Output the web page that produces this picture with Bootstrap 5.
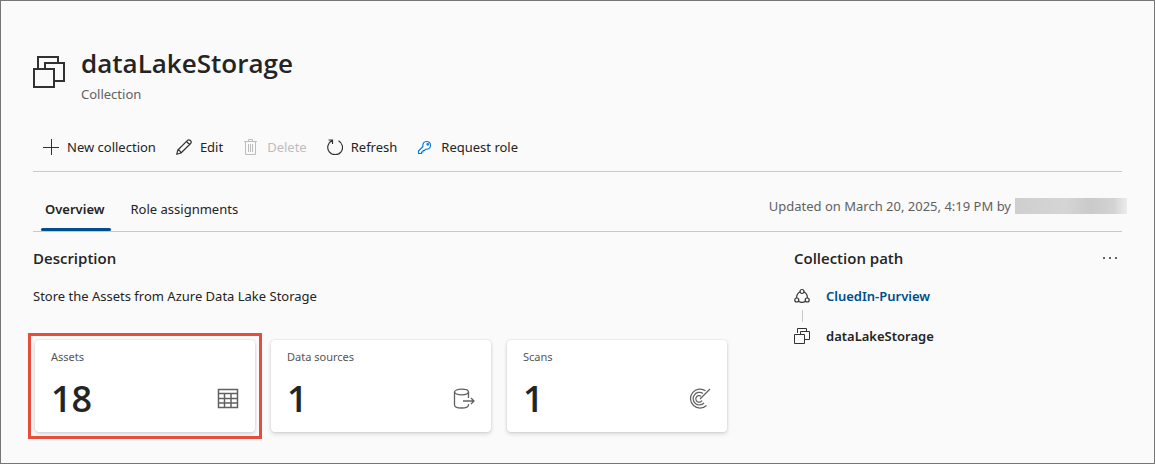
<!DOCTYPE html>
<html lang="en">
<head>
<meta charset="utf-8">
<meta name="viewport" content="width=device-width, initial-scale=1">
<title>dataLakeStorage</title>
<link href="https://cdn.jsdelivr.net/npm/bootstrap@5.3.0/dist/css/bootstrap.min.css" rel="stylesheet">
<style>
body { font-family: "Noto Sans", "Open Sans", sans-serif; font-size: 13px; line-height: 20px; color: #242424; background: #fafafa; }
.page-frame { border: 1px solid #767676; padding: 44px 32px 22px; }
.page-title { font-family: "Open Sans", sans-serif; font-size: 26px; line-height: 36px; font-weight: 600; margin-bottom: 3px; }
.muted-text { color: #616161; }
.rule-below { border-bottom: 1px solid #c8c8c8; }
.command-bar { margin-top: 27px; padding: 0 10px 8px; gap: 20px; }
.command { font-size: 13px; line-height: 32px; color: #242424; border: 0; border-radius: 0; }
.command:disabled { color: #bdbdbd; border: 0; opacity: 1; }
.tab-bar { height: 60px; padding-left: 8px; }
.tab-bar .nav-link { position: relative; color: #242424; padding: 12px 4px; }
.tab-bar .nav-link.active { font-weight: 600; }
.tab-bar .nav-link.active::after { content: ""; position: absolute; left: 0; right: 0; bottom: 0; height: 3px; border-radius: 2px; background: #004e8c; }
.nav-tabs-row { gap: 16px; }
.tab-bar .nav-link.active { padding-right: 6px; }
.redacted { width: 112px; height: 16px; margin-right: -5px; background: linear-gradient(90deg, #cfcfcf, #d5d5d5 45%, #cacaca 68%, #d3d3d3 88%, #ececee); }
.overview { padding-top: 14px; }
.section-title { font-family: "Open Sans", sans-serif; font-size: 15px; line-height: 24px; font-weight: 600; }
.metrics { gap: 16px; margin: 34px 2px 0; }
.metric { flex: 0 1 220px; height: 92px; padding: 6px 16px 0; border-radius: 4px; background: #fff; box-shadow: 0 0 2px rgba(0,0,0,.14), 0 2px 4px rgba(0,0,0,.14); }
.metric-label { font-size: 11px; line-height: 22px; color: #555; }
.metric-value { font-family: "Open Sans", sans-serif; font-size: 36px; line-height: 62px; font-weight: 600; }
.highlighted { position: relative; }
.highlighted::after { content: ""; position: absolute; inset: -7px; border: 3px solid #e74c3c; }
.path-panel { flex: 0 0 328px; }
.path-link { color: #004e8c; }
.path-joint { width: 1px; height: 12px; margin-left: 8px; background: #c8c8c8; }
</style>
</head>
<body>
<main class="page-frame min-vh-100">
  <header class="d-flex gap-3">
    <svg class="mt-2" width="32" height="36" viewBox="0 0 32 36" fill="none" stroke="#323130" stroke-width="2"><path d="M5 15V4h20v6M12 15v-5h19v18h-9M1 16h20v18H1z"/></svg>
    <div>
      <h1 class="page-title">dataLakeStorage</h1>
      <div class="muted-text">Collection</div>
    </div>
  </header>

  <div class="command-bar rule-below d-flex" role="toolbar" aria-label="Collection commands">
    <button type="button" class="command btn p-0 d-flex align-items-center gap-2"><svg width="16" height="16" fill="none" stroke="#323130"><path d="M8.500 0v16M0 8.500h16"/></svg>New collection</button>
    <button type="button" class="command btn p-0 d-flex align-items-center gap-2"><svg width="16" height="16" fill="none" stroke="#323130" stroke-width="1.200" stroke-linejoin="round"><path d="M.7 15.300l1.200-4.300 9.600-9.600q1.200-1.200 2.900.1 1.500 1.500.2 3L5 14zM10.500 2.500l3 3M1.900 11q2.400.3 3.100 3"/></svg>Edit</button>
    <button type="button" class="command btn p-0 d-flex align-items-center gap-2" disabled><svg width="16" height="16" fill="none" stroke="#bdbdbd"><path d="M1 2.500h13M5.500 2V.5h4V2M2.500 3v12.500h10V3M5.500 5v8M7.500 5v8M9.500 5v8"/></svg>Delete</button>
    <button type="button" class="command btn p-0 d-flex align-items-center gap-2"><svg width="16" height="16" fill="none" stroke="#323130" stroke-width="1.200"><path d="M5 1.600a7.400 7.400 0 1 0 6.500.1M1.500 1h4v4"/></svg>Refresh</button>
    <button type="button" class="command btn p-0 d-flex align-items-center gap-2"><svg width="16" height="16" fill="none" stroke="#0078d4" stroke-width="1.100" stroke-linejoin="round"><path d="M6 7.500C5.300 4.500 7 2.500 9.500 2.500c2.300 0 4 1.700 4 3.900 0 2.500-2 4.200-4.700 3.800L7.500 11.500H6V13H4.500v1.500h-3v-2.500z"/><circle cx="10.700" cy="5.300" r=".8"/></svg>Request role</button>
  </div>

  <div class="tab-bar rule-below d-flex justify-content-between">
    <nav class="nav nav-tabs-row align-self-end" aria-label="Sections">
      <a class="nav-link active" href="#overview" aria-current="page">Overview</a>
      <a class="nav-link" href="#roles">Role assignments</a>
    </nav>
    <div class="muted-text d-flex align-items-center gap-1 pt-2">Updated on March 20, 2025, 4:19 PM by <span class="redacted"></span></div>
  </div>

  <div class="overview d-flex" id="overview">
    <section class="flex-grow-1">
      <h2 class="section-title mb-0">Description</h2>
      <p class="mt-3 mb-0">Store the Assets from Azure Data Lake Storage</p>
      <div class="metrics d-flex">
        <article class="metric highlighted">
          <div class="metric-label">Assets</div>
          <div class="d-flex justify-content-between align-items-center"><span class="metric-value">18</span>
            <svg width="22" height="22" fill="none" stroke="#616161" stroke-width="1.500"><path d="M1.500 1.500h19v18h-19zM1.500 5.500h19M1.500 10.500h19M1.500 15h19M7.500 5.500v14M14 5.500v14"/></svg></div>
        </article>
        <article class="metric">
          <div class="metric-label">Data sources</div>
          <div class="d-flex justify-content-between align-items-center"><span class="metric-value">1</span>
            <svg width="22" height="22" fill="none" stroke="#616161" stroke-width="1.300"><ellipse cx="8.500" cy="4" rx="7" ry="2.800"/><path d="M1.500 4v13c0 1.800 3 3 7 3s7-1.200 7-3v-1M15.500 4v6M10 13h11M18 10l3 3-3 3"/></svg></div>
        </article>
        <article class="metric">
          <div class="metric-label">Scans</div>
          <div class="d-flex justify-content-between align-items-center"><span class="metric-value">1</span>
            <svg width="22" height="22" fill="none" stroke="#616161" stroke-width="1.200"><path d="M16.500 2.800A9.500 9.500 0 1 0 17.500 17.500M14 5.500A6.300 6.300 0 1 0 15 15M12 8.200A3.300 3.300 0 1 0 13 12.500M11 11L21 1"/></svg></div>
        </article>
      </div>
    </section>
    <aside class="path-panel">
      <div class="d-flex justify-content-between align-items-center">
        <h2 class="section-title mb-0">Collection path</h2>
        <button type="button" class="btn border-0 p-0 me-1 d-flex" aria-label="More actions"><svg width="16" height="16" fill="#323130"><circle cx="2" cy="8" r="1"/><circle cx="8" cy="8" r="1"/><circle cx="14" cy="8" r="1"/></svg></button>
      </div>
      <div class="d-flex align-items-center mt-3"><svg class="me-3" width="16" height="16" fill="none" stroke="#323130" stroke-width="1.200"><circle cx="8" cy="3.500" r="2"/><circle cx="2.800" cy="12" r="2"/><circle cx="13.200" cy="12" r="2"/><path d="M6 4Q2.600 5.500 2.600 10M10 4q3.400 1.500 3.400 6M4.700 13.500q3.300 1.800 6.600 0"/></svg><a class="path-link fw-semibold text-decoration-none" href="#root">CluedIn-Purview</a></div>
      <div class="path-joint my-1"></div>
      <div class="d-flex align-items-center fw-semibold"><svg class="me-3" width="16" height="16" fill="none" stroke="#323130"><path d="M3.500 5V.5h9V3M6.500 6V3.500h9v8h-5M.5 6.500h10v9H.5z"/></svg>dataLakeStorage</div>
    </aside>
  </div>
</main>
<script src="https://cdn.jsdelivr.net/npm/bootstrap@5.3.0/dist/js/bootstrap.bundle.min.js"></script>
</body>
</html>
